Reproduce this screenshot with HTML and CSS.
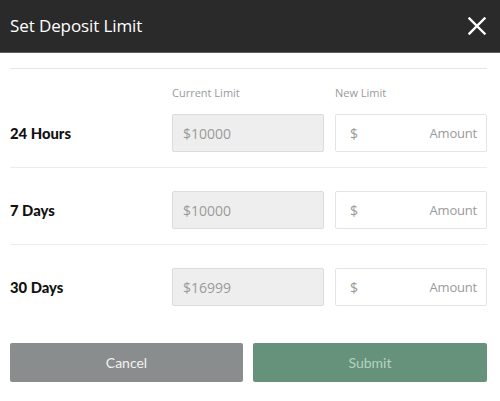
FILE: index.html
```html
<!DOCTYPE html>
<html>
<head>
<meta charset="utf-8">
<link rel="stylesheet" href="styles.css">
</head>
<body>
<div class="modal">
  <header class="head">
    <h1 class="title">Set Deposit Limit</h1>
    <button class="close" aria-label="Close">
      <svg width="18" height="18" viewBox="0 0 18 18"><path d="M1.5 1.5 L16.5 16.5 M16.5 1.5 L1.5 16.5" stroke="#fff" stroke-width="2.4" stroke-linecap="square" fill="none"/></svg>
    </button>
  </header>
  <div class="content">
    <div class="grid labels">
      <span></span>
      <span class="cap">Current Limit</span>
      <span class="cap">New Limit</span>
    </div>
    <div class="grid row first">
      <span class="period">24 Hours</span>
      <div class="box cur">$10000</div>
      <div class="box new"><span>$</span><span class="ph">Amount</span></div>
    </div>
    <div class="grid row">
      <span class="period">7 Days</span>
      <div class="box cur">$10000</div>
      <div class="box new"><span>$</span><span class="ph">Amount</span></div>
    </div>
    <div class="grid row last">
      <span class="period">30 Days</span>
      <div class="box cur">$16999</div>
      <div class="box new"><span>$</span><span class="ph">Amount</span></div>
    </div>
    <div class="actions">
      <button class="btn cancel">Cancel</button>
      <button class="btn submit">Submit</button>
    </div>
  </div>
</div>
</body>
</html>
```
FILE: styles.css
```css
html, body { margin: 0; padding: 0; background: #fff; }
body { width: 500px; height: 401px; overflow: hidden; font-family: "Open Sans", "DejaVu Sans", sans-serif; }
.head {
  height: 52px;
  background: #2a2a2a;
  border-bottom: 1px solid #5e5e5e;
  display: flex;
  align-items: center;
  justify-content: space-between;
  padding: 0 14px 0 10px;
}
.title {
  margin: 0 0 2px;
  color: #fff;
  font-size: 17px;
  font-weight: 400;
  font-family: "Open Sans", sans-serif;
  letter-spacing: -0.1px;
}
.close {
  background: none;
  border: 0;
  padding: 0;
  width: 18px;
  height: 18px;
  display: flex;
}
.content { padding: 15px 13px 0 10px; }
.grid {
  display: grid;
  grid-template-columns: 1fr 152px 152px;
  column-gap: 11px;
  align-items: center;
}
.labels {
  border-top: 1px solid #e6e6e6;
  height: 45px;
}
.cap {
  font-size: 11px;
  color: #9a9a9a;
  padding-top: 1px;
}
.row { padding: 23px 0 15px; border-bottom: 1px solid #ececec; }
.row.first { padding-top: 0; }
.row.last { border-bottom: 0; padding-bottom: 0; }
.period {
  font-family: "Lato", sans-serif;
  font-weight: 900;
  font-size: 14.8px;
  color: #111;
}
.box {
  height: 38px;
  box-sizing: border-box;
  border-radius: 2px;
  font-size: 14px;
  color: #9a9a9a;
  display: flex;
  align-items: center;
  padding: 0 10px;
}
.cur { background: #eeeeee; border: 1px solid #dcdcdc; }
.new { background: #fff; border: 1px solid #e4e4e4; justify-content: space-between; padding: 0 9px 0 14px; }
.ph { font-size: 13px; letter-spacing: -0.2px; }
.actions {
  margin-top: 37px;
  display: grid;
  grid-template-columns: 233px 234px;
  column-gap: 10px;
}
.btn {
  height: 39px;
  border: 0;
  border-radius: 2px;
  font-family: "Lato", sans-serif;
  font-size: 14px;
}
.cancel { background: #8a8d8d; color: #f2f2f2; }
.submit { background: #66927b; color: #b5d2c1; }
```
